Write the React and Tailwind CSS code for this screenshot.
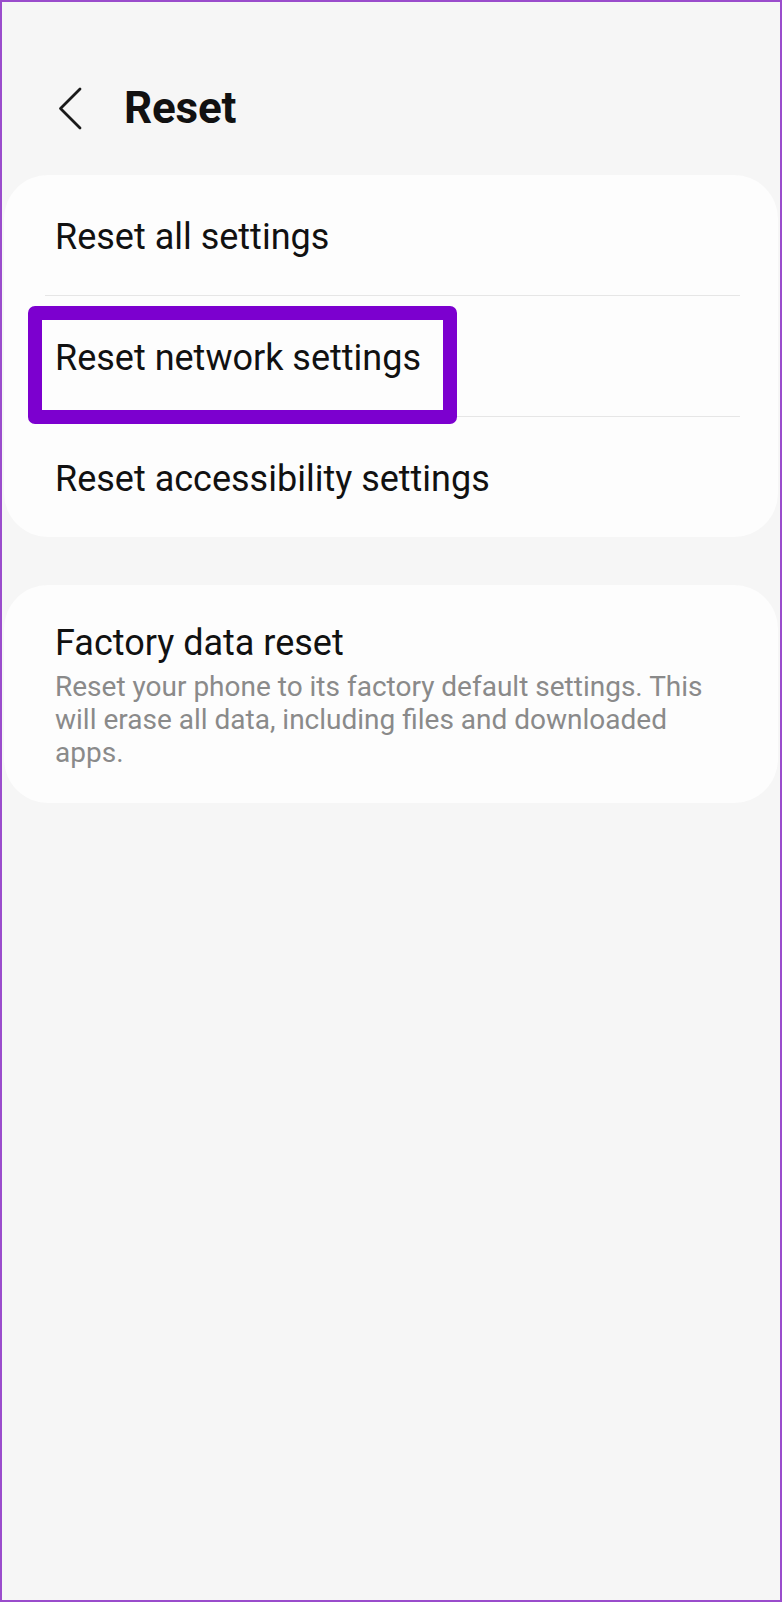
const resetItems = ['Reset all settings', 'Reset network settings', 'Reset accessibility settings']

function BackChevron() {
  return (
    <svg width="26" height="43" viewBox="0 0 26 43" fill="none" className="ml-[55px] mt-[3px]">
      <path d="M23 2 L3.5 21.5 L23 41" stroke="#1a1a1a" strokeWidth="2.8" strokeLinecap="round" strokeLinejoin="round" />
    </svg>
  )
}

export default function App() {
  return (
    <div className="h-[1602px] w-[782px] overflow-hidden border-2 border-[#9a4ccc] bg-[#f6f6f6] font-['Roboto',sans-serif] text-[#111]">
      {/* header */}
      <div className="flex h-[173px] items-start pt-[82px]">
        <BackChevron />
        <h1 className="ml-[41px] mt-[2px] text-[44px] font-bold leading-[44px] tracking-[-0.2px]">Reset</h1>
      </div>

      {/* reset options */}
      <div className="relative mx-[2px] rounded-[44px] bg-[#fdfdfd]">
        {resetItems.map((label, i) => (
          <div key={label}>
            {i > 0 && <div className="ml-[41px] mr-[38px] h-px bg-[#e6e6e6]" />}
            <div className="flex h-[120px] items-center pl-[51px] pt-[4px] text-[36px] leading-[44px]">{label}</div>
          </div>
        ))}
        {/* highlight box */}
        <div className="absolute left-[24px] top-[131px] h-[118px] w-[429px] rounded-[7px] border-[14px] border-[#7c00cf]" />
      </div>

      {/* factory reset */}
      <div className="mx-[2px] mt-[48px] rounded-[44px] bg-[#fdfdfd] pb-[34px] pl-[51px] pr-[30px] pt-[36px]">
        <div className="text-[36px] leading-[44px]">Factory data reset</div>
        <p className="mt-[5px] text-[28px] leading-[33px] text-[#8a8a8a]">
          Reset your phone to its factory default settings. This
          <br />
          will erase all data, including files and downloaded
          <br />
          apps.
        </p>
      </div>
    </div>
  )
}
